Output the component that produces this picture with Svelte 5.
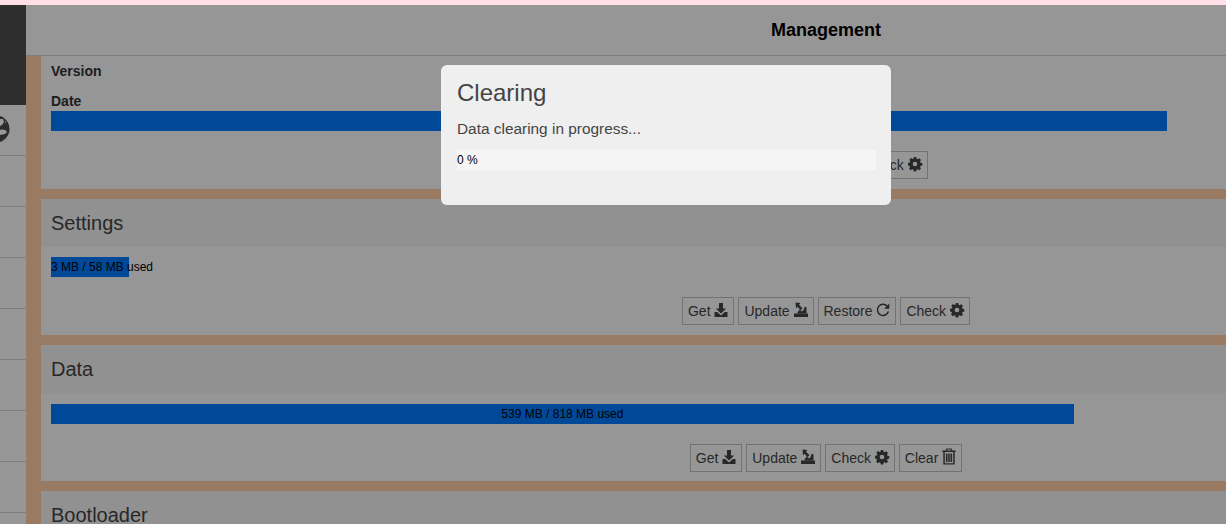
<script>
	const sections = [
		{
			title: 'Settings',
			used: 3,
			total: 58,
			fill: 5,
			actions: ['get', 'update', 'restore', 'check']
		},
		{
			title: 'Data',
			used: 539,
			total: 818,
			fill: 65.9,
			actions: ['get', 'update', 'check', 'clear']
		},
		{ title: 'Bootloader', used: 0, total: 0, fill: 0, actions: [] }
	];
	const labels = { get: 'Get', update: 'Update', restore: 'Restore', check: 'Check', clear: 'Clear' };
	const sideRows = [0, 1, 2, 3, 4, 5, 6, 7];
</script>

{#snippet icon(name)}
	<svg class="icon" viewBox="0 0 14 14" aria-hidden="true">
		{#if name === 'get'}
			<path d="M5 0h4v5.500h3.200L7 10.600 1.800 5.500H5z" />
			<path d="M0.500 9h2.700L7 12.500 10.800 9h2.700v5H.500z" />
		{:else if name === 'update'}
			<path d="M0 10.500h14V14H0z" />
			<path d="M3 10.500 5.500 6.500 8 8.500 10 6.500 10.500 3.500 12.500 4.500V10.500z" />
			<path d="M1.500 -.5 6.500 0 5 1.700 8.500 5.200 6.500 7.300 3.500 3.800 2 5.500z" />
		{:else if name === 'restore'}
			<path d="M11.300 3.200A5.600 5.600 0 1 0 12.400 8.500" fill="none" stroke="currentColor" stroke-width="1.500" />
			<path d="M13.300 .6v5.200H8.100z" />
		{:else if name === 'check'}
			<path
				fill-rule="evenodd"
				d="M5.800 0h2.400l.4 1.800 1.100.5 1.600-1 1.700 1.700-1 1.600.5 1.100 1.800.4v2.400l-1.800.4-.5 1.100 1 1.600-1.700 1.700-1.600-1-1.100.5-.4 1.800H5.800l-.4-1.800-1.100-.5-1.600 1-1.700-1.700 1-1.600-.5-1.100L0 8.200V5.800l1.800-.4.500-1.100-1-1.600 1.700-1.700 1.600 1 1.100-.5zM7 4.700a2.300 2.300 0 1 0 0 4.600 2.300 2.300 0 0 0 0-4.600z"
			/>
		{:else if name === 'clear'}
			<path
				fill-rule="evenodd"
				d="M4.500-1.500h5l1 2h3.200V2h-1V14.500H1.300V2h-1V.5h3.200zM5.200-.5l-.4 1h4.400l-.4-1zM2.800 2V13.200H11.200V2zM3.900 3.500H5.500V12H3.900zM6.200 3.500H7.800V12H6.200zM8.500 3.500H10.100V12H8.500z"
			/>
		{/if}
	</svg>
{/snippet}

{#snippet buttons(actions)}
	<div class="actions">
		{#each actions as action}
			<button class="btn" type="button">{labels[action]} {@render icon(action)}</button>
		{/each}
	</div>
{/snippet}

<div class="strip"></div>

<div class="page">
	<aside class="sidebar">
		<div class="brand"></div>
		<div class="siderow globe-row">
			<svg class="globe" viewBox="0 0 28 28" aria-hidden="true">
				<circle cx="14" cy="14" r="13.5" fill="#4a4a4a" />
				<path fill="#fff" d="M18 4h3l1 3-2 3-2 1zM18 15c3-1 6 0 7 2l-2 2-5 1zM23 6l1 1-1 1z" />
			</svg>
		</div>
		{#each sideRows as row (row)}
			<div class="siderow"></div>
		{/each}
	</aside>

	<main class="main">
		<header class="title">Management</header>
		<div class="sections">
			<section class="card">
				<div class="body firmware">
					<div class="label">Version</div>
					<div class="label">Date</div>
					<div class="progress"><div class="fill" style="width: 71.9%"></div></div>
					{@render buttons(['get', 'update', 'check'])}
				</div>
			</section>

			{#each sections as section}
				<section class="card">
					<h2 class="card-head">{section.title}</h2>
					{#if section.total}
						<div class="body">
							<div class="progress">
								<div class="fill" style="width: {section.fill}%">
									{section.used} MB / {section.total} MB used
								</div>
							</div>
							{@render buttons(section.actions)}
						</div>
					{/if}
				</section>
			{/each}
		</div>
	</main>
</div>

<div class="backdrop"></div>

<div class="modal">
	<h3>Clearing</h3>
	<p>Data clearing in progress...</p>
	<div class="modal-progress">0 %</div>
</div>

<style>
	:global(body) {
		margin: 0;
		overflow: hidden;
		background: #fafafa;
		font-family: 'Liberation Sans', Arial, sans-serif;
		color: #444;
	}

	.strip {
		height: 5px;
		background: #ffe0e6;
	}

	.page {
		display: flex;
		width: 1626px;
	}

	.sidebar {
		flex: 0 0 26px;
		min-width: 0;
		overflow: hidden;
	}

	.brand {
		height: 100px;
		background: #4e4e4e;
	}

	.siderow {
		height: 50px;
		border-bottom: 1px solid #d0d0d0;
		overflow: hidden;
	}

	.globe-row {
		display: flex;
		align-items: center;
		justify-content: flex-end;
		padding-right: 16px;
	}

	.globe {
		flex: none;
		width: 28px;
		height: 28px;
		margin-top: -3px;
	}

	.main {
		flex: 1;
		min-width: 0;
	}

	.title {
		height: 50px;
		line-height: 50px;
		text-align: center;
		font-size: 18px;
		font-weight: bold;
		color: #000;
		border-bottom: 1px solid #d0d0d0;
	}

	.sections {
		display: flex;
		flex-direction: column;
		gap: 10px;
		padding: 0 13px 0 15px;
		background: #ffcba4;
	}

	.card {
		background: #fafafa;
	}

	.card-head {
		margin: 0;
		padding: 12px 10px;
		font-size: 20px;
		font-weight: normal;
		line-height: 24.8px;
		background: #f2f2f2;
	}

	.body {
		padding: 10px 10px 9.5px;
	}

	.firmware {
		padding: 5px 10px 9.6px;
	}

	.firmware .actions {
		padding-right: 4px;
	}

	.label {
		height: 20px;
		margin-bottom: 10px;
		font-size: 14px;
		font-weight: bold;
		line-height: 20px;
		color: #333;
	}

	.label:nth-child(2) {
		margin-bottom: 0;
	}

	.progress {
		height: 20px;
		background: #fbfbfb;
	}

	.fill {
		height: 100%;
		background: #007bff;
		color: #000;
		font-size: 12px;
		line-height: 20px;
		text-align: center;
		white-space: nowrap;
	}

	.actions {
		display: flex;
		justify-content: center;
		gap: 4px;
		margin-top: 20px;
		padding-right: 2px;
	}

	.btn {
		height: 28px;
		padding: 0 5px;
		border: 1px solid #c0c0c0;
		background: transparent;
		color: #444;
		font: 14px 'Liberation Sans', Arial, sans-serif;
		white-space: nowrap;
	}

	.icon {
		width: 14px;
		height: 14px;
		fill: currentColor;
		overflow: visible;
		vertical-align: -1px;
	}

	.backdrop {
		position: fixed;
		inset: 5px 0 0;
		background: rgba(0, 0, 0, 0.4);
	}

	.modal {
		position: fixed;
		top: 65px;
		left: 441px;
		box-sizing: border-box;
		width: 450px;
		height: 140px;
		padding: 16px;
		border-radius: 6px;
		background: #efefef;
		color: #444;
	}

	.modal h3 {
		margin: 0;
		font-size: 24px;
		font-weight: normal;
		line-height: 24px;
	}

	.modal p {
		margin: 16px 0 0;
		font-size: 15.4px;
		line-height: 16px;
	}

	.modal-progress {
		height: 20px;
		margin-top: 13px;
		width: 419px;
		background: #f5f5f5;
		color: #000;
		font-size: 12px;
		line-height: 20px;
	}
</style>
